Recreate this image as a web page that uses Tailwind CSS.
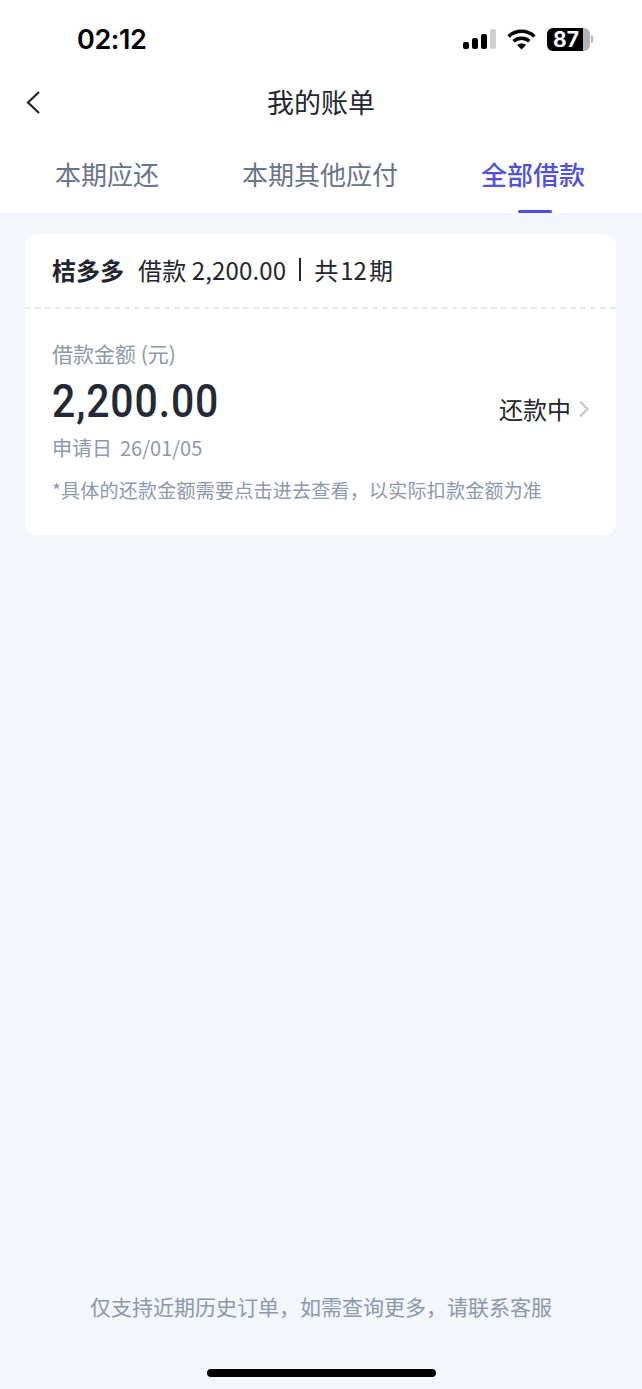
<!DOCTYPE html>
<html lang="zh-CN">
<head>
    <meta charset="UTF-8">
    <meta name="viewport" content="width=device-width, initial-scale=1.0">
    <title>我的账单</title>
    <script src="https://cdn.jsdelivr.net/npm/@tailwindcss/browser@4"></script>
</head>
<body class="bg-[#f3f6fb] font-['Noto_Sans_CJK_SC','Noto_Sans',sans-serif]">
<div class="w-[642px] h-[1389px] flex flex-col overflow-hidden">

    <!-- Header -->
    <div class="bg-white h-[213px] flex flex-col">
        <!-- Status bar -->
        <div class="h-[76px] flex items-center justify-between pl-[77px] pr-[49px] pt-[2px]">
            <span class="text-[27px] leading-none font-semibold tracking-[-0.4px] text-black font-['Inter',sans-serif]">02:12</span>
            <div class="flex items-center gap-[11px]">
                <svg width="33" height="21" viewBox="0 0 33 21">
                    <rect x="0" y="13" width="6" height="7" rx="2" fill="#000"/>
                    <rect x="9" y="9" width="6" height="11" rx="2" fill="#000"/>
                    <rect x="18" y="5" width="6" height="15" rx="2" fill="#000"/>
                    <rect x="27" y="0" width="6" height="20" rx="2" fill="#cfcfcf"/>
                </svg>
                <svg width="29" height="21" viewBox="0 0 29 21" fill="none" stroke="#000" stroke-width="3.4">
                    <path d="M1.6 7.4C9 .6 20 .6 27.4 7.4"/>
                    <path d="M6.6 12.2C11 8.2 18 8.2 22.4 12.2"/>
                    <path d="M14.5 20.5L10 16C12.4 14 16.6 14 19 16Z" fill="#000" stroke="none"/>
                </svg>
                <div class="flex items-center">
                    <div class="w-[36px] h-[23px] bg-black rounded-l-[6px] flex items-center justify-center pl-[2px]">
                        <span class="text-[21px] leading-none font-bold text-white font-['Inter',sans-serif]">87</span>
                    </div>
                    <div class="w-[7px] h-[23px] bg-[#b5b5b5] rounded-r-[6px]"></div>
                    <div class="w-[2px] h-[8px] ml-[1px] bg-[#b5b5b5] rounded-r-full"></div>
                </div>
            </div>
        </div>

        <!-- Nav -->
        <div class="relative h-[54px] flex items-center justify-center pb-[4px]">
            <svg class="absolute left-[25px] top-[14px]" width="16" height="25" viewBox="0 0 16 25" fill="none" stroke="#23262e" stroke-width="2.2">
                <path d="M14 2L3 12.5L14 23"/>
            </svg>
            <span class="text-[27px] leading-none text-[#23262e]">我的账单</span>
        </div>

        <!-- Tabs -->
        <div class="relative flex-1 flex justify-between pl-[55px] pr-[57px] pt-[25px] text-[26px] leading-[38px] text-[#68748a]">
            <span>本期应还</span>
            <span>本期其他应付</span>
            <span class="font-medium text-[#5050e6]">全部借款</span>
            <div class="absolute left-[518px] bottom-0 w-[34px] h-[3px] rounded-full bg-[#5050e6]"></div>
        </div>
    </div>

    <!-- Card -->
    <div class="mx-[25px] mt-[21px] h-[301px] w-[591px] bg-white rounded-[12px] flex flex-col">
        <div class="h-[73px] flex items-center pl-[27px] pb-[2px] text-[24px] leading-none text-[#23262e]">
            <span class="font-bold mr-[14px]">桔多多</span>
            <span class="tracking-[0.15px]">借款 2,200.00</span>
            <span class="w-[2px] h-[23px] bg-[#23262e] mx-[13px]"></span>
            <span>共<span class="mx-[2px]">12</span>期</span>
        </div>
        <div class="border-t-2 border-dashed border-[#e8e9ed]"></div>
        <div class="flex-1 flex flex-col pl-[27px] pr-[27px] pt-[29px]">
            <div class="flex items-center justify-between">
                <div class="flex flex-col">
                    <span class="text-[21px] leading-[30px] text-[#8d97ad]">借款金额 (元)</span>
                    <span class="text-[46px] leading-[56px] mt-[5px] font-medium tracking-[1px] text-[#232a36] font-['Roboto',sans-serif] origin-left scale-x-[0.89]">2,200.00</span>
                    <span class="text-[20px] leading-[30px] mt-[4px] text-[#8d97ad]">申请日<span class="ml-[8px]">26/01/05</span></span>
                </div>
                <div class="flex items-center gap-[7px] mt-[16px]">
                    <span class="text-[24px] leading-none text-[#23262e]">还款中</span>
                    <svg width="11" height="18" viewBox="0 0 11 18" fill="none" stroke="#c4c8d0" stroke-width="2.2">
                        <path d="M2 1.5L9.5 9L2 16.5"/>
                    </svg>
                </div>
            </div>
            <span class="text-[19px] leading-[28px] mt-[13px] tracking-[0.24px] whitespace-nowrap text-[#8d97ad]">*具体的还款金额需要点击进去查看，以实际扣款金额为准</span>
        </div>
    </div>

    <!-- Footer note -->
    <div class="flex-1 flex flex-col items-center justify-end">
        <span class="text-[21px] leading-[30px] text-[#8d97ad]">仅支持近期历史订单，如需查询更多，请联系客服</span>
        <div class="w-[229px] h-[8px] rounded-full bg-black mt-[48px] mb-[12px]"></div>
    </div>
</div>
</body>
</html>
